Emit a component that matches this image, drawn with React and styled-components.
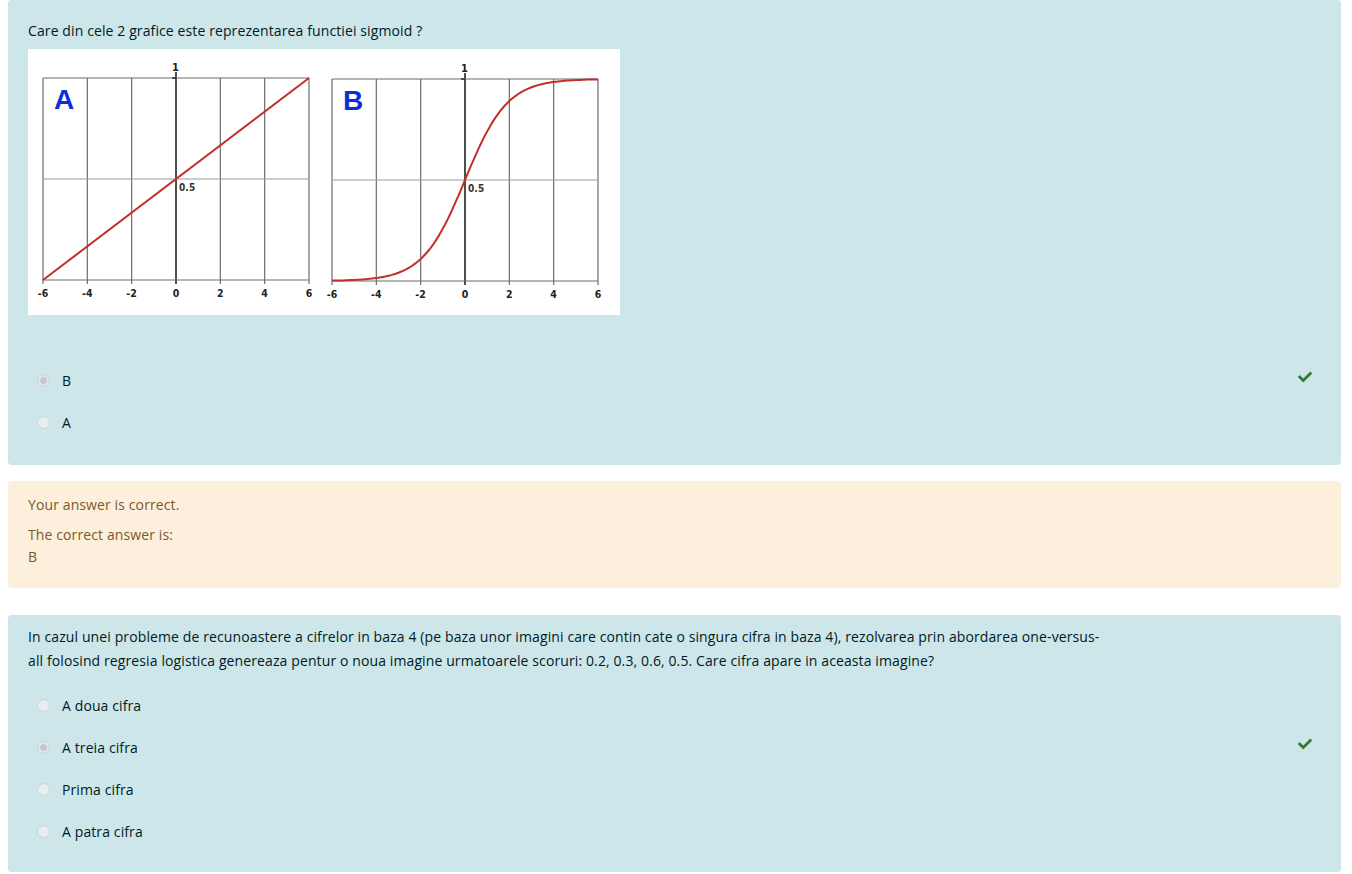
import React from 'react'
import styled, { createGlobalStyle } from 'styled-components'
import { FaCheck } from 'react-icons/fa'

const GlobalStyle = createGlobalStyle`
  body {
    margin: 0;
    background: #fff;
    font-family: "Open Sans", "Noto Sans", sans-serif;
    font-size: 14px;
    letter-spacing: 0.11px;
    color: #001a1e;
  }
`

const Page = styled.div`
  padding: 0 11px 0 8px;
  display: flex;
  flex-direction: column;
`

const Card = styled.div`
  background: #cde6ea;
  border-radius: 4px;
  padding: ${p => p.pad || '20px 20px'};
  margin-bottom: ${p => p.gap || '0'};
  display: flex;
  flex-direction: column;
`

const Feedback = styled.div`
  background: #fcefdc;
  color: #7d5a29;
  border-radius: 4px;
  padding: 13px 20px 20px;
  margin-bottom: 27px;
  display: flex;
  flex-direction: column;
`

const QText = styled.div`
  line-height: 24px;
`

const Figure = styled.div`
  margin-top: 6px;
  width: 592px;
  height: 266px;
  background: #fff;
`

const Options = styled.div`
  display: flex;
  flex-direction: column;
  margin-top: ${p => p.top || '0'};
`

const Option = styled.div`
  display: flex;
  align-items: center;
  height: 42px;
  padding-left: 9px;
`

const Radio = styled.span`
  width: 13px;
  height: 13px;
  border-radius: 50%;
  box-sizing: border-box;
  border: 1.5px solid #cdd2d4;
  background: ${p => (p.checked ? '#e2e6e8' : '#e8eef0')};
  display: flex;
  align-items: center;
  justify-content: center;
  &::after {
    content: '';
    width: 7px;
    height: 7px;
    border-radius: 50%;
    background: ${p => (p.checked ? '#c3c8ca' : 'transparent')};
  }
`

const Label = styled.span`
  margin-left: 12px;
  flex: 1;
`

const Tick = styled.span`
  color: #357a32;
  display: flex;
  margin-right: 9px;
  margin-top: -6px;
`

const FbLine = styled.div`
  line-height: 22px;
  margin-top: ${p => p.top || '0'};
`

const Graph = ({ ox, oy, letter, curve }) => {
  const w = 266
  const h = 202
  const step = w / 6
  const cols = [0, 1, 2, 3, 4, 5, 6]
  const toX = v => ox + ((v + 6) / 12) * w
  const toY = v => oy + h - v * h
  let d = ''
  if (curve === 'line') {
    d = `M${ox} ${oy + h} L${ox + w} ${oy}`
  } else {
    const pts = []
    for (let i = 0; i <= 120; i++) {
      const x = -6 + (12 * i) / 120
      const y = 1 / (1 + Math.exp(-x * 1.05))
      pts.push(`${toX(x).toFixed(1)} ${toY(y).toFixed(1)}`)
    }
    d = 'M' + pts.join(' L')
  }
  const labels = ['-6', '-4', '-2', '0', '2', '4', '6']
  const font = '"DejaVu Sans Condensed", "Liberation Sans", sans-serif'
  return (
    <g>
      {cols.map(i => (
        <line
          key={i}
          x1={ox + i * step}
          x2={ox + i * step}
          y1={i === 3 ? oy - 6 : oy}
          y2={oy + h + 4}
          stroke={i === 3 ? '#222' : '#6d6d6d'}
          strokeWidth={i === 3 ? 1.6 : 1.2}
        />
      ))}
      <line x1={ox} x2={ox + w} y1={oy} y2={oy} stroke="#6d6d6d" strokeWidth="1.2" />
      <line x1={ox} x2={ox + w} y1={oy + h} y2={oy + h} stroke="#6d6d6d" strokeWidth="1.2" />
      <line x1={ox} x2={ox + w} y1={oy + h / 2} y2={oy + h / 2} stroke="#9a9a9a" strokeWidth="1" />
      <line x1={ox + 3 * step - 4} x2={ox + 3 * step} y1={oy} y2={oy} stroke="#222" strokeWidth="1.4" />
      <path d={d} fill="none" stroke="#c0302a" strokeWidth="2" />
      <text x={ox + 3 * step - 4} y={oy - 7} fontSize="11" fontWeight="bold" fill="#222" fontFamily={font}>1</text>
      <text x={ox + 3 * step + 3} y={oy + h / 2 + 12} fontSize="10" fontWeight="bold" fill="#333" fontFamily={font}>0.5</text>
      {labels.map((l, i) => (
        <text key={l} x={ox + i * step} y={oy + h + 17} fontSize="10.5" fontWeight="bold" fill="#222"
          textAnchor="middle" fontFamily={font}>{l}</text>
      ))}
      <text x={ox + 11} y={oy + 31} fontSize="28" fontWeight="bold" fill="#0b2fd8"
        fontFamily='"Liberation Sans", Arial, sans-serif'>{letter}</text>
    </g>
  )
}

const App = () => {
  return (
    <>
      <GlobalStyle />
      <Page>
        <Card pad="19px 20px 22px" gap="16px">
          <QText>Care din cele 2 grafice este reprezentarea functiei sigmoid ?</QText>
          <Figure>
            <svg width="592" height="266" viewBox="0 0 592 266">
              <Graph ox={15} oy={29} letter="A" curve="line" />
              <Graph ox={304} oy={30} letter="B" curve="sigmoid" />
            </svg>
          </Figure>
          <Options top="44px">
            <Option>
              <Radio checked />
              <Label>B</Label>
              <Tick><FaCheck size={14} /></Tick>
            </Option>
            <Option>
              <Radio />
              <Label>A</Label>
            </Option>
          </Options>
        </Card>
        <Feedback>
          <FbLine>Your answer is correct.</FbLine>
          <FbLine top="8px">The correct answer is:</FbLine>
          <FbLine>B</FbLine>
        </Feedback>
        <Card pad="10px 20px 20px">
          <QText>
            In cazul unei probleme de recunoastere a cifrelor in baza 4 (pe baza unor imagini care contin cate o singura cifra in baza 4), rezolvarea prin abordarea one-versus-
            <br />
            all folosind regresia logistica genereaza pentur o noua imagine urmatoarele scoruri: 0.2, 0.3, 0.6, 0.5. Care cifra apare in aceasta imagine?
          </QText>
          <Options top="11px">
            <Option>
              <Radio />
              <Label>A doua cifra</Label>
            </Option>
            <Option>
              <Radio checked />
              <Label>A treia cifra</Label>
              <Tick><FaCheck size={14} /></Tick>
            </Option>
            <Option>
              <Radio />
              <Label>Prima cifra</Label>
            </Option>
            <Option>
              <Radio />
              <Label>A patra cifra</Label>
            </Option>
          </Options>
        </Card>
      </Page>
    </>
  )
}

export default App
